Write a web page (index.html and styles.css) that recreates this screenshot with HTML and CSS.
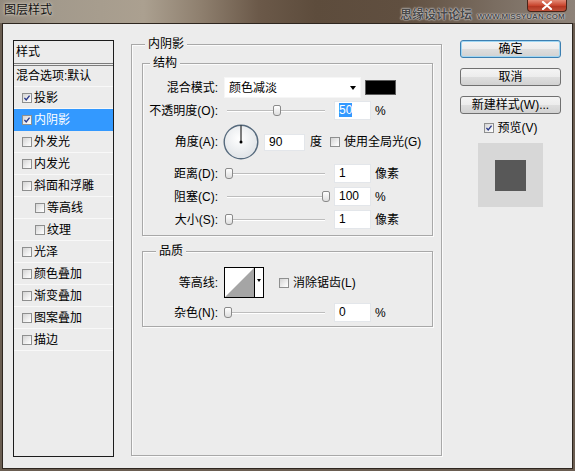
FILE: index.html
```html
<!DOCTYPE html>
<html>
<head>
<meta charset="utf-8">
<title>图层样式</title>
<link rel="stylesheet" href="styles.css">
</head>
<body>
<div class="window">
  <div class="titlebar">
    <span class="title">图层样式</span>
    <div class="close">
      <svg width="12" height="9" viewBox="0 0 12 9"><path d="M2 1 L10 8 M10 1 L2 8" stroke="#fff" stroke-width="2.2" stroke-linecap="round"/></svg>
    </div>
    <div class="watermark"><span class="wm-cn">思缘设计论坛</span><span class="wm-en">WWW.MISSYUAN.COM</span></div>
  </div>
  <div class="client">
    <div class="styles-list">
      <div class="list-head">样式</div>
      <div class="list-row first">混合选项:默认</div>
      <div class="list-row"><span class="cb checked"><svg viewBox="0 0 10 10"><path d="M1.8 4.8 L4 7.4 L8.2 2" fill="none" stroke="#27378a" stroke-width="1.7"/></svg></span>投影</div>
      <div class="list-row selected"><span class="cb checked"><svg viewBox="0 0 10 10"><path d="M1.8 4.8 L4 7.4 L8.2 2" fill="none" stroke="#27378a" stroke-width="1.7"/></svg></span>内阴影</div>
      <div class="list-row"><span class="cb"></span>外发光</div>
      <div class="list-row"><span class="cb"></span>内发光</div>
      <div class="list-row"><span class="cb"></span>斜面和浮雕</div>
      <div class="list-row indent"><span class="cb"></span>等高线</div>
      <div class="list-row indent"><span class="cb"></span>纹理</div>
      <div class="list-row"><span class="cb"></span>光泽</div>
      <div class="list-row"><span class="cb"></span>颜色叠加</div>
      <div class="list-row"><span class="cb"></span>渐变叠加</div>
      <div class="list-row"><span class="cb"></span>图案叠加</div>
      <div class="list-row"><span class="cb"></span>描边</div>
    </div>

    <div class="group main-group">
      <span class="group-title">内阴影</span>

      <div class="group sub structure">
        <span class="group-title t-struct">结构</span>
        <div class="row r-mode">
          <span class="label">混合模式:</span>
          <div class="select"><span>颜色减淡</span><span class="arrow"></span></div>
          <span class="swatch"></span>
        </div>
        <div class="row r-opacity">
          <span class="label">不透明度(O):</span>
          <div class="slider"><span class="track"></span><span class="thumb" style="left:49px"></span></div>
          <span class="num"><span class="sel">50</span></span>
          <span class="unit">%</span>
        </div>
        <div class="row r-angle">
          <span class="label">角度(A):</span>
          <svg class="dial" width="36" height="36" viewBox="0 0 36 36">
            <defs>
              <radialGradient id="dg" cx="45%" cy="40%" r="65%">
                <stop offset="0" stop-color="#ffffff"/>
                <stop offset="1" stop-color="#dde1e5"/>
              </radialGradient>
            </defs>
            <circle cx="18" cy="18" r="16.8" fill="url(#dg)" stroke="#566a7d" stroke-width="1.4"/>
            <line x1="18" y1="18" x2="18" y2="1.5" stroke="#000" stroke-width="1"/>
            <circle cx="18" cy="18" r="1.5" fill="#000"/>
          </svg>
          <span class="num angle">90</span>
          <span class="unit deg">度</span>
          <span class="cb global"></span>
          <span class="cb-label">使用全局光(G)</span>
        </div>
        <div class="row">
          <span class="label">距离(D):</span>
          <div class="slider"><span class="track"></span><span class="thumb" style="left:1px"></span></div>
          <span class="num">1</span>
          <span class="unit">像素</span>
        </div>
        <div class="row">
          <span class="label">阻塞(C):</span>
          <div class="slider"><span class="track"></span><span class="thumb" style="left:98px"></span></div>
          <span class="num">100</span>
          <span class="unit">%</span>
        </div>
        <div class="row">
          <span class="label">大小(S):</span>
          <div class="slider"><span class="track"></span><span class="thumb" style="left:1px"></span></div>
          <span class="num">1</span>
          <span class="unit">像素</span>
        </div>
      </div>

      <div class="group sub quality">
        <span class="group-title t-quality">品质</span>
        <div class="row r-contour">
          <span class="label">等高线:</span>
          <div class="contour">
            <svg class="curve" width="29" height="29" viewBox="0 0 29 29"><polygon points="0,29 29,0 29,29" fill="#a5a5a5"/></svg>
            <span class="contour-arrow"><span class="arrow"></span></span>
          </div>
          <span class="cb aa"></span>
          <span class="cb-label">消除锯齿(L)</span>
        </div>
        <div class="row r-noise">
          <span class="label">杂色(N):</span>
          <div class="slider"><span class="track"></span><span class="thumb" style="left:0px"></span></div>
          <span class="num">0</span>
          <span class="unit">%</span>
        </div>
      </div>
    </div>

    <div class="side">
      <div class="btn default">确定</div>
      <div class="btn">取消</div>
      <div class="btn">新建样式(W)...</div>
      <div class="preview-row"><span class="cb checked"><svg viewBox="0 0 10 10"><path d="M1.8 4.8 L4 7.4 L8.2 2" fill="none" stroke="#27378a" stroke-width="1.7"/></svg></span><span class="cb-label">预览(V)</span></div>
      <div class="preview"><span class="preview-square"></span></div>
    </div>
  </div>
</div>
</body>
</html>
```

FILE: styles.css
```css
html, body {
  margin: 0;
  padding: 0;
}
body {
  width: 575px;
  height: 471px;
  overflow: hidden;
  font-family: "Liberation Sans", "Noto Sans CJK SC", sans-serif;
  font-size: 12px;
  color: #000;
}
.window {
  width: 575px;
  height: 471px;
  display: flex;
  flex-direction: column;
  background: #6a5d51;
}
.titlebar {
  position: relative;
  height: 23px;
  flex: none;
  display: flex;
  align-items: flex-start;
  background: linear-gradient(to right, #938a7e 0%, #a39a8c 10%, #aba090 25%, #8e7f6e 35%, #6b5949 45%, #5d4c3c 55%, #604f40 70%, #7a6d61 86%, #8e8379 100%);
}
.title {
  margin: 3px 0 0 4px;
  line-height: 14px;
  color: #111;
  text-shadow: 0 0 4px #d9d1c5, 0 0 2px #d9d1c5;
}
.close {
  margin-left: auto;
  margin-right: 8px;
  width: 40px;
  height: 12px;
  box-sizing: border-box;
  border: 1px solid #4a2419;
  border-top: none;
  border-radius: 0 0 4px 4px;
  background: linear-gradient(#e38a75, #c9462f 50%, #b1321e 51%, #c2523a);
  display: flex;
  align-items: center;
  justify-content: center;
}
.close svg {
  display: block;
}
.watermark {
  position: absolute;
  left: 400px;
  top: 8px;
  display: flex;
  align-items: baseline;
  gap: 5px;
  color: #4a4a4a;
  text-shadow: 0 0 1px #e8e8e8, 0 0 2px #e8e8e8;
}
.wm-cn {
  font-size: 12px;
  line-height: 14px;
  font-weight: bold;
}
.wm-en {
  font-size: 8px;
  line-height: 10px;
  font-weight: bold;
}

.client {
  flex: 1;
  margin: 0 2px 2px 2px;
  border: 1px solid #2e261f;
  background: #ececec;
  display: flex;
  align-items: flex-start;
  padding: 16px 0 0 10px;
}

/* left list */
.styles-list {
  flex: none;
  width: 101px;
  height: 417px;
  box-sizing: border-box;
  border: 1px solid #1c1c1c;
}
.list-head {
  height: 22px;
  line-height: 22px;
  padding-left: 2px;
  border-bottom: 3px double #7c7c7c;
}
.list-row {
  height: 22px;
  box-sizing: border-box;
  display: flex;
  align-items: center;
  padding-left: 8px;
  border-bottom: 1px solid #f8f8f8;
  line-height: 16px;
  white-space: nowrap;
}
.list-row.first {
  height: 21px;
  padding-left: 2px;
}
.list-row.indent {
  padding-left: 21px;
}
.list-row.selected {
  background: #3399ff;
  color: #fff;
  border-bottom-color: #3399ff;
}
.list-row .cb {
  margin-right: 2px;
}

/* checkbox */
.cb {
  flex: none;
  display: inline-block;
  width: 10px;
  height: 10px;
  box-sizing: border-box;
  border: 1px solid #8e8f8f;
  background: linear-gradient(135deg, #d4d4d4, #f4f4f4 70%, #fff);
  position: relative;
}
.cb svg {
  display: block;
  width: 8px;
  height: 8px;
}
.cb-label {
  white-space: nowrap;
  line-height: 16px;
}

/* groups */
.group {
  position: relative;
  box-sizing: border-box;
  border: 1px solid #a8a8a8;
  box-shadow: inset 1px 1px 0 #fbfbfb, 1px 1px 0 #fbfbfb;
}
.group-title {
  position: absolute;
  top: -9px;
  left: 13px;
  padding: 0 3px;
  line-height: 16px;
  background: #ececec;
}
.main-group {
  flex: none;
  margin: 4px 0 0 17px;
  width: 311px;
  height: 412px;
  padding: 18px 8px 0 10px;
}
.sub.structure {
  padding: 13px 0 6px 0;
}
.t-struct {
  left: 7px;
}
.sub.quality {
  margin-top: 15px;
  padding: 15px 0 4px 0;
}
.t-quality {
  left: 13px;
}

.row {
  display: flex;
  align-items: center;
  height: 19px;
  margin-top: 4px;
  line-height: 16px;
  white-space: nowrap;
}
.row.r-mode {
  height: 21px;
  margin-top: 0;
}
.row.r-opacity {
  margin-top: 3px;
}
.row.r-angle {
  height: 36px;
}
.row.r-contour {
  height: 31px;
  margin-top: 0;
}
.row.r-noise {
  margin-top: 5px;
}
.label {
  flex: none;
  width: 75px;
  margin-right: 6px;
  text-align: right;
}

/* controls */
.select {
  flex: none;
  width: 137px;
  height: 21px;
  box-sizing: border-box;
  background: #fff;
  border: 1px solid #f6f6f6;
  display: flex;
  align-items: center;
  padding: 0 4px 0 4px;
}
.arrow {
  margin-left: auto;
  width: 0;
  height: 0;
  border-left: 3.5px solid transparent;
  border-right: 3.5px solid transparent;
  border-top: 4px solid #000;
}
.swatch {
  flex: none;
  width: 31px;
  height: 15px;
  box-sizing: border-box;
  margin-left: 4px;
  background: #000;
  border: 1px solid #5c5c5c;
}
.slider {
  flex: none;
  position: relative;
  width: 106px;
  height: 19px;
}
.track {
  position: absolute;
  left: 3px;
  right: 5px;
  top: 9px;
  height: 1px;
  background: #bdbdbd;
  border-bottom: 1px solid #fff;
}
.thumb {
  position: absolute;
  top: 4px;
  width: 8px;
  height: 11px;
  box-sizing: border-box;
  border: 1px solid #8a8a8a;
  border-radius: 2px 2px 3px 3px;
  background: linear-gradient(#ffffff, #dedede);
}
.num {
  flex: none;
  width: 37px;
  height: 19px;
  box-sizing: border-box;
  margin-left: 4px;
  background: #fff;
  border: 1px solid #e3e6ea;
  padding-left: 4px;
  line-height: 17px;
}
.num .sel {
  background: #3399ff;
  color: #fff;
  display: inline-block;
  line-height: 14px;
}
.num.angle {
  width: 41px;
  height: 17px;
  line-height: 15px;
  margin-left: 5px;
}
.unit {
  margin-left: 4px;
}
.unit.deg {
  margin-left: 5px;
}
.dial {
  flex: none;
  display: block;
  margin-left: -1px;
}
.cb.global {
  margin-left: 8px;
  margin-right: 4px;
}
.contour {
  flex: none;
  width: 40px;
  height: 31px;
  box-sizing: border-box;
  border: 1px solid #000;
  background: #fff;
  display: flex;
}
.curve {
  display: block;
  flex: none;
}
.contour-arrow {
  flex: 1;
  border-left: 1px solid #000;
  display: flex;
  align-items: center;
  justify-content: center;
  padding-bottom: 4px;
}
.contour-arrow .arrow {
  margin-left: 0;
  border-left-width: 2.5px;
  border-right-width: 2.5px;
  border-top-width: 3px;
}
.cb.aa {
  margin-left: 15px;
  margin-right: 4px;
}

/* side */
.side {
  flex: none;
  margin-left: 18px;
  width: 101px;
  display: flex;
  flex-direction: column;
  align-items: center;
}
.btn {
  width: 101px;
  height: 18px;
  box-sizing: border-box;
  border: 1px solid #707070;
  border-radius: 3px;
  background: linear-gradient(#f4f4f4 0%, #ececec 50%, #dedede 51%, #d2d2d2 100%);
  display: flex;
  align-items: center;
  justify-content: center;
  line-height: 16px;
  margin-bottom: 10px;
  white-space: nowrap;
}
.btn.default {
  border-color: #3c7fb1;
  box-shadow: inset 0 0 0 1px #9fd6f3;
}
.preview-row {
  margin-top: -4px;
  height: 16px;
  display: flex;
  align-items: center;
  gap: 4px;
}
.preview {
  margin-top: 7px;
  width: 65px;
  height: 64px;
  background: #d7d7d7;
  display: flex;
  align-items: center;
  justify-content: center;
}
.preview-square {
  width: 31px;
  height: 31px;
  background: #585858;
}
```
